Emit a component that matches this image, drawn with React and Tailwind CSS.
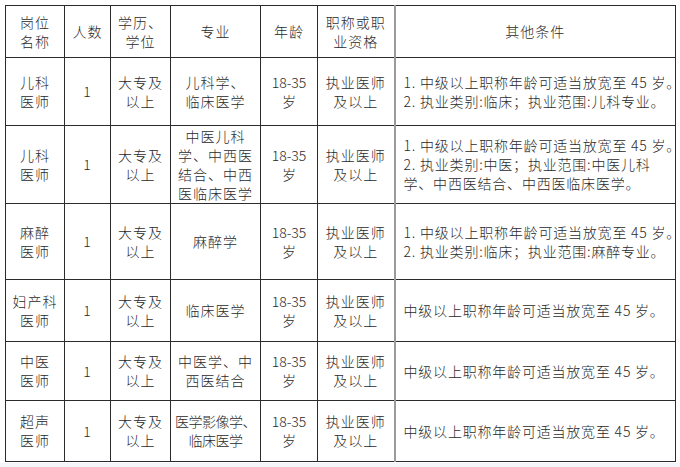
import React from "react";

const rows = [
  {
    id: 1,
    h: "h-[68px]",
    post: ["儿科", "医师"],
    major: ["儿科学、", "临床医学"],
    other: ["1. 中级以上职称年龄可适当放宽至 45 岁。", "2. 执业类别:临床；执业范围:儿科专业。"],
  },
  {
    id: 2,
    h: "h-[78px]",
    post: ["儿科", "医师"],
    major: ["中医儿科", "学、中西医", "结合、中西", "医临床医学"],
    other: [
      "1. 中级以上职称年龄可适当放宽至 45 岁。",
      "2. 执业类别:中医；执业范围:中医儿科",
      "学、中西医结合、中西医临床医学。",
    ],
  },
  {
    id: 3,
    h: "h-[76px]",
    post: ["麻醉", "医师"],
    major: ["麻醉学"],
    other: ["1. 中级以上职称年龄可适当放宽至 45 岁。", "2. 执业类别:临床；执业范围:麻醉专业。"],
  },
  {
    id: 4,
    h: "h-[62px]",
    post: ["妇产科", "医师"],
    major: ["临床医学"],
    other: ["中级以上职称年龄可适当放宽至 45 岁。"],
  },
  {
    id: 5,
    h: "h-[59px]",
    post: ["中医", "医师"],
    major: ["中医学、中", "西医结合"],
    other: ["中级以上职称年龄可适当放宽至 45 岁。"],
  },
  {
    id: 6,
    h: "h-[61px]",
    post: ["超声", "医师"],
    major: ["医学影像学、", "临床医学"],
    other: ["中级以上职称年龄可适当放宽至 45 岁。"],
    tightMajor: true,
  },
];

const Lines = ({ items }) =>
  items.map((t, i) => (
    <div key={i} className="whitespace-nowrap">
      {t}
    </div>
  ));

const cell = "border border-[#2b2b2b] text-center align-middle p-0";

export default function App() {
  return (
    <div
      className="bg-white text-[#2a2a2a] text-[14px] leading-[19px] tracking-[1px] font-light"
      style={{ fontFamily: '"Noto Sans CJK SC", "Noto Sans", sans-serif' }}
    >
      <div className="pt-[5px] pl-[5px] pb-[1px]">
        <table className="border-collapse table-fixed w-[671px]">
          <colgroup>
            <col className="w-[59px]" />
            <col className="w-[46px]" />
            <col className="w-[60px]" />
            <col className="w-[90px]" />
            <col className="w-[57px]" />
            <col className="w-[77px]" />
            <col className="w-[281px]" />
          </colgroup>
          <thead>
            <tr className="h-[52px]">
              <th className={`${cell} font-light`}>
                <Lines items={["岗位", "名称"]} />
              </th>
              <th className={`${cell} font-light`}>人数</th>
              <th className={`${cell} font-light`}>
                <Lines items={["学历、", "学位"]} />
              </th>
              <th className={`${cell} font-light`}>专业</th>
              <th className={`${cell} font-light`}>年龄</th>
              <th className={`${cell} font-light border-r-2 border-r-[#9a9a9a]`}>
                <Lines items={["职称或职", "业资格"]} />
              </th>
              <th className={`${cell} font-light`}>其他条件</th>
            </tr>
          </thead>
          <tbody>
            {rows.map((r) => (
              <tr key={r.id} className={r.h}>
                <td className={cell}>
                  <Lines items={r.post} />
                </td>
                <td className={cell}>1</td>
                <td className={cell}>
                  <Lines items={["大专及", "以上"]} />
                </td>
                <td className={`${cell} ${r.tightMajor ? "tracking-[-0.5px]" : ""}`}>
                  <Lines items={r.major} />
                </td>
                <td className={`${cell} tracking-normal`}>
                  <Lines items={["18-35", "岁"]} />
                </td>
                <td className={`${cell} border-r-2 border-r-[#9a9a9a]`}>
                  <Lines items={["执业医师", "及以上"]} />
                </td>
                <td className={`${cell} text-left pl-[8px] tracking-[0.8px]`}>
                  <Lines items={r.other} />
                </td>
              </tr>
            ))}
          </tbody>
        </table>
      </div>
      <div className="h-[6px] bg-[#f2f5fa]" />
    </div>
  );
}
